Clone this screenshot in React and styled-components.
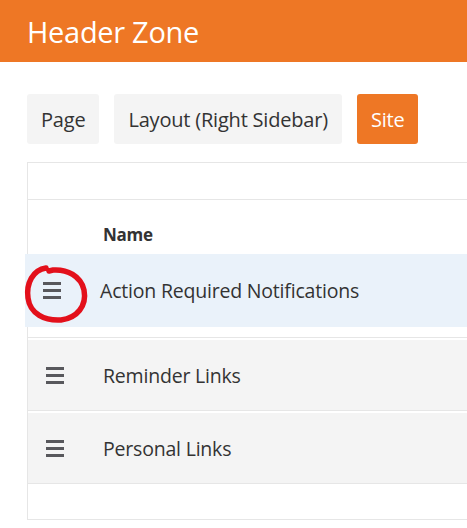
import React from "react";
import styled, { createGlobalStyle } from "styled-components";

const GlobalStyle = createGlobalStyle`
  html, body {
    margin: 0;
    padding: 0;
    background: #ffffff;
    overflow: hidden;
  }
  body {
    font-family: "Open Sans", "Noto Sans", sans-serif;
    color: #333333;
  }
`;

const Header = styled.header`
  height: 62px;
  background-color: #ee7725;
  color: #ffffff;
  display: flex;
  align-items: center;
  padding-left: 27px;
  font-size: 29px;
  letter-spacing: -0.3px;
`;

const Content = styled.div`
  padding: 32px 0 0 27px;
`;

const Tabs = styled.div`
  display: flex;
  gap: 15px;
  height: 50px;
`;

const TabButton = styled.button`
  font-family: inherit;
  font-size: 20px;
  letter-spacing: -0.2px;
  border: none;
  border-radius: 3px;
  padding: 0 14px;
  height: 50px;
  background-color: ${props => (props.active ? "#ee7725" : "#f4f4f4")};
  color: ${props => (props.active ? "#ffffff" : "#333333")};
  cursor: pointer;
`;

const Table = styled.div`
  margin-top: 18px;
  border: 1px solid #e6e6e6;
  border-right: none;
  display: flex;
  flex-direction: column;
`;

const TopRow = styled.div`
  height: 36px;
  border-bottom: 1px solid #e6e6e6;
`;

const HeadRow = styled.div`
  height: 54px;
  box-sizing: border-box;
  padding: 24px 0 0 75px;
  font-size: 17px;
  line-height: 22px;
  font-weight: 700;
  letter-spacing: -0.3px;
`;

const Row = styled.div`
  position: relative;
  display: flex;
  align-items: center;
  height: ${props => props.height}px;
  margin-left: ${props => props.shift}px;
  background-color: ${props => props.bg};
`;

const Gap = styled.div`
  height: ${props => props.height}px;
  border-bottom: ${props => (props.line ? "1px solid #e6e6e6" : "none")};
`;

const Handle = styled.div`
  width: 75px;
  padding-left: 18px;
  box-sizing: border-box;
  display: flex;
  align-items: center;
`;

const Label = styled.span`
  font-size: 19.5px;
  letter-spacing: -0.2px;
  color: #333333;
  white-space: nowrap;
`;

const Annotation = styled.svg`
  position: absolute;
  left: 0;
  top: 11px;
  overflow: visible;
  pointer-events: none;
`;

const MenuIcon = () => (
  <svg width="18" height="17" viewBox="0 0 18 17">
    <rect x="0" y="0" width="18" height="3" fill="#58585c" />
    <rect x="0" y="7" width="18" height="3" fill="#58585c" />
    <rect x="0" y="14" width="18" height="3" fill="#58585c" />
  </svg>
);

const rows = ["Reminder Links", "Personal Links"];

export default function App() {
  return (
    <>
      <GlobalStyle />
      <Header>Header Zone</Header>
      <Content>
        <Tabs>
          <TabButton>Page</TabButton>
          <TabButton>Layout (Right Sidebar)</TabButton>
          <TabButton active>Site</TabButton>
        </Tabs>
        <Table>
          <TopRow />
          <HeadRow>Name</HeadRow>
          <Row height={73} shift={-3} bg="#eaf2fa">
            <Handle>
              <MenuIcon />
            </Handle>
            <Label>Action Required Notifications</Label>
            <Annotation width="64" height="58" viewBox="0 0 64 58">
              <path
                d="M21 3 C 8 5, 1 18, 3 33 C 5 49, 20 56, 36 55 C 52 53, 62 41, 59 25 C 56 11, 42 4, 28 5 L 24 6"
                fill="none"
                stroke="#e3101b"
                strokeWidth="5.5"
                strokeLinecap="round"
              />
            </Annotation>
          </Row>
          <Gap height={10} line />
          {rows.map(name => (
            <React.Fragment key={name}>
              <Gap height={2} />
              <Row height={70} shift={0} bg="#f4f4f4">
                <Handle>
                  <MenuIcon />
                </Handle>
                <Label>{name}</Label>
              </Row>
              <Gap height={0} line />
            </React.Fragment>
          ))}
          <Gap height={35} />
        </Table>
      </Content>
    </>
  );
}
